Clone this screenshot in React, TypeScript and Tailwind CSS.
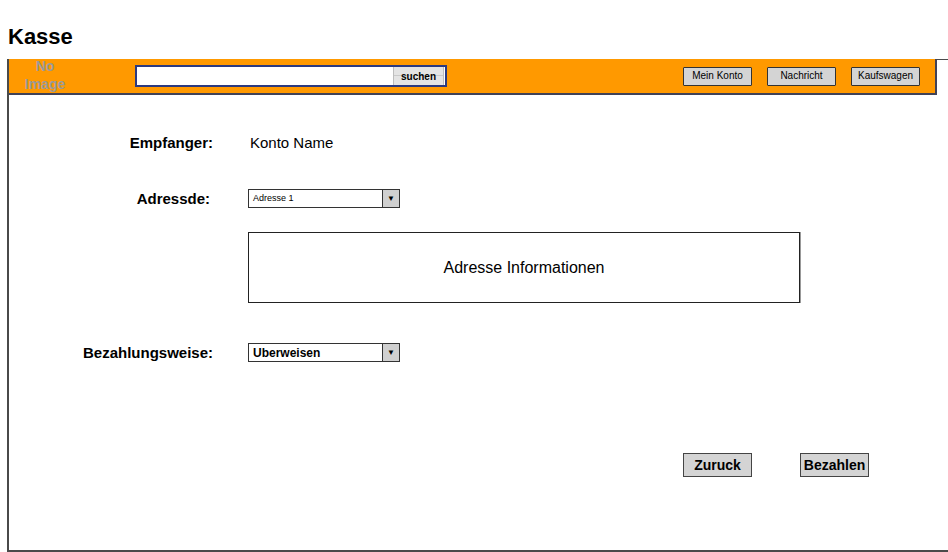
import React from 'react';

const sans = "font-['Liberation_Sans',Arial,sans-serif]";

function NavButton({ label }: { label: string }) {
    return (
        <button className="w-[69px] h-[19px] bg-[#d4d4d4] border border-[#333] rounded-[1px] text-[10px] leading-none text-black">
            {label}
        </button>
    );
}

function Select({ value, bold }: { value: string; bold?: boolean }) {
    return (
        <div className="w-[152px] h-[19px] flex border border-[#333] bg-white">
            <span className={`flex-1 px-1 flex items-center text-black ${bold ? 'text-[12px] font-bold' : 'text-[9px]'}`}>
                {value}
            </span>
            <span className="w-[17px] bg-[#d0d0d0] border-l border-[#333] flex items-center justify-center text-[8px] text-black">
                ▼
            </span>
        </div>
    );
}

export default function App() {
    return (
        <div className={`w-[948px] h-[552px] bg-white overflow-hidden ${sans}`}>
            {/* Title */}
            <h1 className="h-[59px] pl-2 pt-[23px] text-[22px] leading-[28px] font-bold text-black">Kasse</h1>

            {/* Frame */}
            <div className="ml-[7px] h-[493px] border-l-2 border-b-2 border-[#4a4a4a] flex flex-col">
                {/* Header bar */}
                <div className="flex">
                    <header className="w-[928px] h-[36px] bg-[#ff9900] border-r-2 border-b-2 border-[#404257] flex items-center">
                        <div className="w-[72px] text-center text-[14px] leading-[18px] font-bold text-[#9a9a9a] -mt-[2px]">
                            No<br />Image
                        </div>
                        <div className="ml-[54px] w-[312px] h-[22px] bg-white border-2 border-[#2b3a80] flex items-center justify-end pr-px">
                            <button className="w-[51px] h-[18px] bg-[#e4e4e4] border-x border-[#bdbdbd] text-[10px] font-bold text-black bg-[linear-gradient(#e4e4e4,#e4e4e4_45%,#c9c9c9_45%,#c9c9c9_50%,#e4e4e4_50%)]">
                                suchen
                            </button>
                        </div>
                        <div className="ml-auto mr-[15px] flex gap-[15px]">
                            <NavButton label="Mein Konto" />
                            <NavButton label="Nachricht" />
                            <NavButton label="Kaufswagen" />
                        </div>
                    </header>
                    <div className="flex-1 border-t border-[#4a4a4a]" />
                </div>

                {/* Form */}
                <main className="pt-[38px] flex flex-col">
                    <div className="flex items-center h-5">
                        <span className="w-[204px] text-right text-[15px] leading-5 font-bold text-black">Empfanger:</span>
                        <span className="ml-[37px] text-[15px] leading-5 text-black">Konto Name</span>
                    </div>

                    <div className="flex items-center h-[19px] mt-[36px]">
                        <span className="w-[201px] text-right text-[15px] leading-[19px] font-bold text-black">Adressde:</span>
                        <div className="ml-[38px]">
                            <Select value="Adresse 1" />
                        </div>
                    </div>

                    <div className="ml-[239px] mt-[24px] w-[552px] h-[71px] border border-[#222] shadow-[1px_0_0_#999] flex items-center justify-center text-[16px] text-black">
                        Adresse Informationen
                    </div>

                    <div className="flex items-center h-[19px] mt-[40px]">
                        <span className="w-[204px] text-right text-[15px] leading-[19px] font-bold text-black">Bezahlungsweise:</span>
                        <div className="ml-[35px]">
                            <Select value="Uberweisen" bold />
                        </div>
                    </div>

                    <div className="flex mt-[91px] ml-[674px] gap-[48px]">
                        <button className="w-[69px] h-[24px] bg-[#d4d4d4] border border-[#444] text-[14px] font-bold text-black">Zuruck</button>
                        <button className="w-[69px] h-[24px] bg-[#d4d4d4] border border-[#444] text-[14px] font-bold text-black">Bezahlen</button>
                    </div>
                </main>
            </div>
        </div>
    );
}
